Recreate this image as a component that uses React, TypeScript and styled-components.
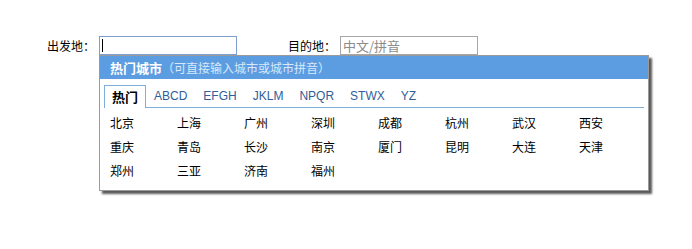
import React from "react";
import styled, { createGlobalStyle } from "styled-components";

const Global = createGlobalStyle`
  html, body { margin: 0; padding: 0; background: #fff; }
  body { font-family: "Noto Sans CJK SC", "Liberation Sans", sans-serif; font-size: 12px; color: #000; }
`;

const Page = styled.div`
  width: 692px;
  height: 249px;
  box-sizing: border-box;
  padding: 36px 0 0 47px;
`;

const Form = styled.div`
  display: flex;
  align-items: center;
`;

const Field = styled.div<{ $offset?: number }>`
  display: flex;
  align-items: center;
  gap: 4px;
  margin-left: ${(p) => p.$offset ?? 0}px;
`;

const Label = styled.span`
  font-size: 12px;
  line-height: 19px;
  color: #000;
  width: 48px;
  white-space: nowrap;
`;

const InputWrap = styled.div`
  position: relative;
`;

const Input = styled.input<{ $focused?: boolean }>`
  box-sizing: border-box;
  width: 138px;
  height: 19px;
  margin: 0;
  padding: 0 2px;
  border: 1px solid ${(p) => (p.$focused ? "#7f9fd0" : "#a7a7a7")};
  font-family: "Noto Sans CJK SC", sans-serif;
  font-size: 13px;
  color: #000;
  outline: none;
  &::placeholder { color: #8c8c8c; }
`;

const Caret = styled.span`
  position: absolute;
  left: 3px;
  top: 3px;
  width: 1px;
  height: 13px;
  background: #000;
`;

const Popup = styled.div`
  position: absolute;
  left: 0;
  top: 19px;
  width: 550px;
  box-sizing: border-box;
  border: 1px solid #9a9a9a;
  background: #fff;
  box-shadow: 3px 3px 2px #5a5a5a;
  z-index: 2;
`;

const Header = styled.div`
  height: 23px;
  line-height: 23px;
  background: #5c9de2;
  padding-left: 10px;
  white-space: nowrap;
`;

const Title = styled.span`
  font-weight: bold;
  font-size: 13px;
  color: #fff;
`;

const Hint = styled.span`
  font-size: 12px;
  color: #d9e8f8;
`;

const Tabs = styled.div`
  display: flex;
  margin: 6px 4px 0;
  height: 22px;
  border-bottom: 1px solid #7eaedb;
`;

const Tab = styled.div<{ $active?: boolean }>`
  height: ${(p) => (p.$active ? 22 : 21)}px;
  line-height: 21px;
  padding: 0 7px;
  border: 1px solid ${(p) => (p.$active ? "#7eaedb" : "transparent")};
  border-bottom: none;
  background: #fff;
  font-family: ${(p) => (p.$active ? '"Noto Sans CJK SC", sans-serif' : '"Liberation Sans", Arial, sans-serif')};
  font-size: ${(p) => (p.$active ? 13 : 12)}px;
  font-weight: ${(p) => (p.$active ? "bold" : "normal")};
  color: ${(p) => (p.$active ? "#000" : "#2f5e98")};
  margin-bottom: ${(p) => (p.$active ? -1 : 0)}px;
`;

const Cities = styled.div`
  display: grid;
  grid-template-columns: repeat(8, 67px);
  grid-auto-rows: 24px;
  padding: 3px 0 7px 10px;
`;

const City = styled.div`
  line-height: 24px;
  font-size: 12px;
  color: #000;
`;

const tabs = ["热门", "ABCD", "EFGH", "JKLM", "NPQR", "STWX", "YZ"];
const cities = [
  "北京", "上海", "广州", "深圳", "成都", "杭州", "武汉", "西安",
  "重庆", "青岛", "长沙", "南京", "厦门", "昆明", "大连", "天津",
  "郑州", "三亚", "济南", "福州",
];

export default function App() {
  return (
    <Page>
      <Global />
      <Form>
        <Field>
          <Label>出发地：</Label>
          <InputWrap>
            <Input $focused readOnly />
            <Caret />
            <Popup>
              <Header>
                <Title>热门城市</Title>
                <Hint>（可直接输入城市或城市拼音）</Hint>
              </Header>
              <Tabs>
                {tabs.map((t, i) => (
                  <Tab key={t} $active={i === 0}>
                    {t}
                  </Tab>
                ))}
              </Tabs>
              <Cities>
                {cities.map((c) => (
                  <City key={c}>{c}</City>
                ))}
              </Cities>
            </Popup>
          </InputWrap>
        </Field>
        <Field $offset={51}>
          <Label>目的地：</Label>
          <Input placeholder="中文/拼音" />
        </Field>
      </Form>
    </Page>
  );
}
